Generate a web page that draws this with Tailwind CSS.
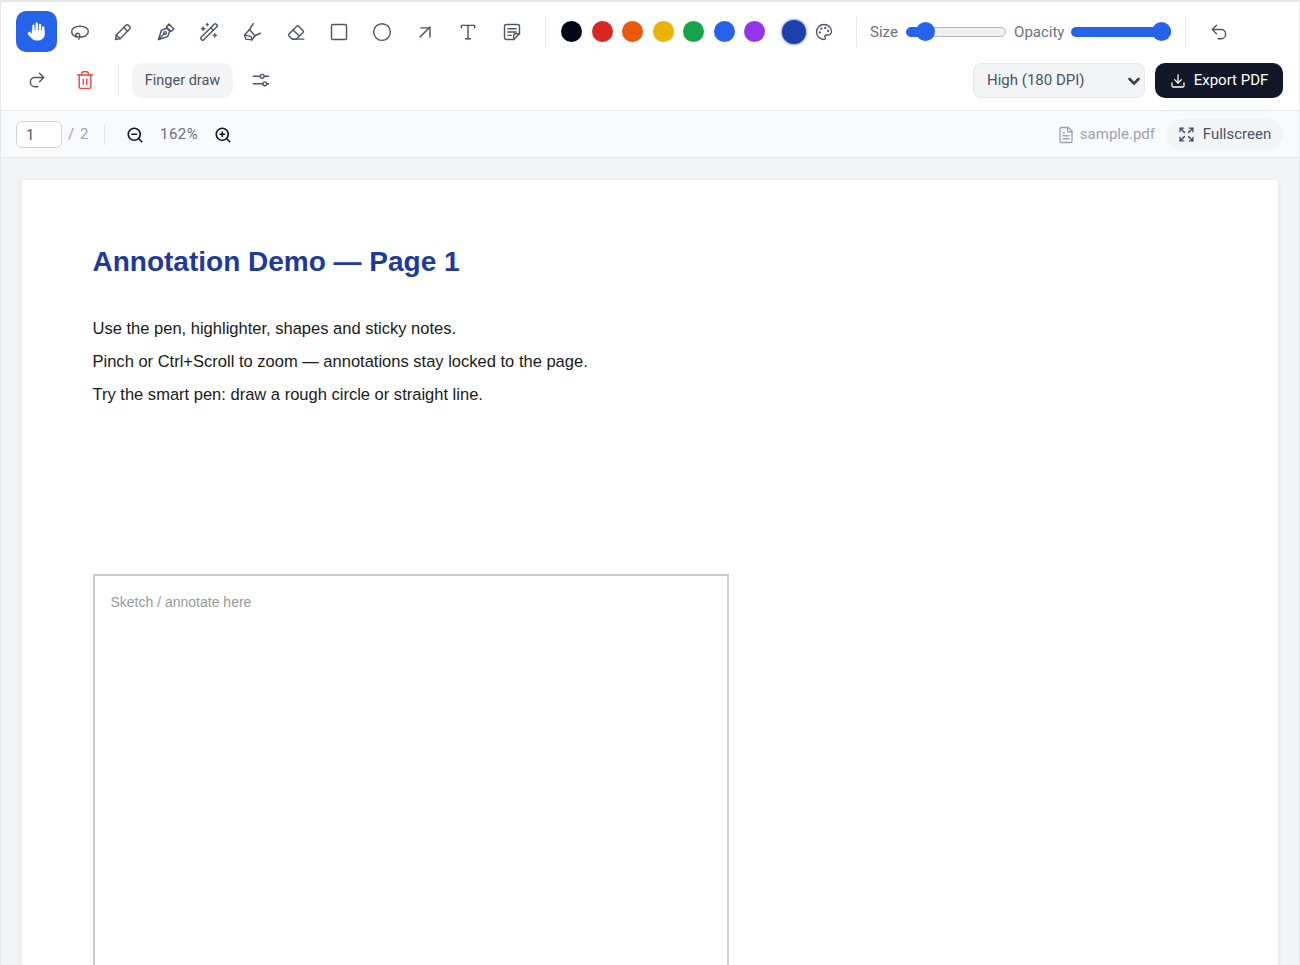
<!DOCTYPE html>
<html lang="en">
<head>
  <meta charset="UTF-8">
  <title>PDF Annotator</title>
  <script src="https://cdn.jsdelivr.net/npm/@tailwindcss/browser@4"></script>
</head>
<body class="bg-[#f3f4f6] font-['Roboto',sans-serif] h-[965px] overflow-hidden">
  <div class="border-x border-[#e5e7eb] h-[965px] flex flex-col">

    <!-- toolbar -->
    <div class="bg-white border-t-2 border-b border-[#e5e7eb] h-[111px] pl-[15px] pr-[16px] pt-[9px] flex flex-col gap-[7.500px] shrink-0">
      <div class="flex items-center h-[41px]">
        <div class="flex gap-[2.200px]">
          <button class="w-[41px] h-[41px] rounded-[10px] bg-[#2563eb] flex items-center justify-center">
            <svg class="w-[21px] h-[21px]" viewBox="0 0 24 24" fill="#fff" stroke="#fff" stroke-linecap="round" stroke-linejoin="round"><path d="M8.500 5.500v9M12.300 3v9M16 4.500v9M19.700 7.500v7" stroke-width="2.800" fill="none"/><path d="M7.200 11h13.900v4a7 7 0 0 1-7 7h-2c-2.500 0-4.200-.9-5.500-2.200l-4-4.300a1.700 1.700 0 0 1 2.500-2.300l2.100 2z" stroke-width=".6"/></svg>
          </button>
          <button class="w-[41px] h-[41px] flex items-center justify-center text-[#4b5563]"><svg class="w-[20px] h-[20px]" viewBox="0 0 24 24" fill="none" stroke="currentColor" stroke-width="1.700" stroke-linecap="round" stroke-linejoin="round"><path d="M8 18c-3.500-1-6-3.500-6-6.500C2 7.500 6.500 5 12 5s10 2.500 10 6.500-4.500 6.500-10 6.500c-3 0-5-1-5-2.500s2-2.500 3.500-1.500c1.500 1 1.500 3.500 0 6.500"/></svg></button>
          <button class="w-[41px] h-[41px] flex items-center justify-center text-[#4b5563]"><svg class="w-[20px] h-[20px]" viewBox="0 0 24 24" fill="none" stroke="currentColor" stroke-width="1.700" stroke-linecap="round" stroke-linejoin="round"><path d="M3 21l1-5.500L15.500 4a2.100 2.100 0 0 1 3 0l1.500 1.500a2.100 2.100 0 0 1 0 3L8.500 20z"/><path d="M13 6.500l4.500 4.500"/><path d="M4 15.500l4.500 4.500"/></svg></button>
          <button class="w-[41px] h-[41px] flex items-center justify-center text-[#4b5563]"><svg class="w-[20px] h-[20px]" viewBox="0 0 24 24" fill="none" stroke="currentColor" stroke-width="1.700" stroke-linecap="round" stroke-linejoin="round"><path d="M3 21l3.500-11 6.500-2.500 3.500 3.500-2.500 6.500z"/><path d="M12.500 6l3-3.500 6 6-3.500 3z"/><path d="M3 21l6.500-6.500"/><circle cx="10.800" cy="13.200" r="1.700"/></svg></button>
          <button class="w-[41px] h-[41px] flex items-center justify-center text-[#4b5563]"><svg class="w-[20px] h-[20px]" viewBox="0 0 24 24" fill="none" stroke="currentColor" stroke-width="1.700" stroke-linecap="round" stroke-linejoin="round"><path d="m21.640 3.640-1.280-1.280a1.210 1.210 0 0 0-1.720 0L2.360 18.640a1.210 1.210 0 0 0 0 1.720l1.280 1.280a1.200 1.200 0 0 0 1.720 0L21.640 5.360a1.200 1.200 0 0 0 0-1.720"/><path d="m14 7 3 3"/><path d="M5 6v4"/><path d="M19 14v4"/><path d="M10 2v2"/><path d="M7 8H3"/><path d="M21 16h-4"/><path d="M11 3H9"/></svg></button>
          <button class="w-[41px] h-[41px] flex items-center justify-center text-[#4b5563]"><svg class="w-[20px] h-[20px]" viewBox="0 0 24 24" fill="none" stroke="currentColor" stroke-width="1.700" stroke-linecap="round" stroke-linejoin="round"><path d="M13.500 2 9 9"/><path d="M22 13.500l-6.500 3"/><path d="M9 9l6.500 7.500"/><path d="M9 9l-6 6.500 1.500 5 7.500 1 3.500-5"/><path d="M3 15.500l8 2 1 4"/></svg></button>
          <button class="w-[41px] h-[41px] flex items-center justify-center text-[#4b5563]"><svg class="w-[20px] h-[20px]" viewBox="0 0 24 24" fill="none" stroke="currentColor" stroke-width="1.700" stroke-linecap="round" stroke-linejoin="round"><path d="M7.500 20.500 3.500 16.500a1.500 1.500 0 0 1 0-2L13 5a1.500 1.500 0 0 1 2 0l5.500 5.500a1.500 1.500 0 0 1 0 2l-8 8z"/><path d="M8.500 9.500l6.500 6.500"/><path d="M7.500 20.500H21.500"/></svg></button>
          <button class="w-[41px] h-[41px] flex items-center justify-center text-[#4b5563]"><svg class="w-[20px] h-[20px]" viewBox="0 0 24 24" fill="none" stroke="currentColor" stroke-width="1.700" stroke-linecap="round" stroke-linejoin="round"><rect x="3" y="3" width="18" height="18" rx="1.500"/></svg></button>
          <button class="w-[41px] h-[41px] flex items-center justify-center text-[#4b5563]"><svg class="w-[20px] h-[20px]" viewBox="0 0 24 24" fill="none" stroke="currentColor" stroke-width="1.700"><circle cx="12" cy="12" r="10"/></svg></button>
          <button class="w-[41px] h-[41px] flex items-center justify-center text-[#4b5563]"><svg class="w-[20px] h-[20px]" viewBox="0 0 24 24" fill="none" stroke="currentColor" stroke-width="1.700" stroke-linecap="round" stroke-linejoin="round"><path d="M7 7h11v11"/><path d="M6 18 18 6"/></svg></button>
          <button class="w-[41px] h-[41px] flex items-center justify-center text-[#4b5563]"><svg class="w-[20px] h-[20px]" viewBox="0 0 24 24" fill="none" stroke="currentColor" stroke-width="1.700" stroke-linecap="round" stroke-linejoin="round"><path d="M12 4v16"/><path d="M4 7V4h16v3"/><path d="M9 20h6"/></svg></button>
          <button class="w-[41px] h-[41px] flex items-center justify-center text-[#4b5563]"><svg class="w-[20px] h-[20px]" viewBox="0 0 24 24" fill="none" stroke="currentColor" stroke-width="1.700" stroke-linecap="round" stroke-linejoin="round"><path d="M14 21H5a2 2 0 0 1-2-2V5a2 2 0 0 1 2-2h14a2 2 0 0 1 2 2v9z"/><path d="M14 21v-5a2 2 0 0 1 2-2h5"/><path d="M7 8h10M7 12h10M7 16h4"/></svg></button>
        </div>

        <div class="w-px h-[30px] bg-[#e5e7eb] ml-[13px] mr-[15px]"></div>

        <div class="flex gap-[9.500px]">
          <span class="w-[21px] h-[21px] rounded-full bg-[#030712] shadow-[0_0_0_2px_#f9fafb]"></span>
          <span class="w-[21px] h-[21px] rounded-full bg-[#dc2626] shadow-[0_0_0_2px_#f9fafb]"></span>
          <span class="w-[21px] h-[21px] rounded-full bg-[#ea580c] shadow-[0_0_0_2px_#f9fafb]"></span>
          <span class="w-[21px] h-[21px] rounded-full bg-[#eab308] shadow-[0_0_0_2px_#f9fafb]"></span>
          <span class="w-[21px] h-[21px] rounded-full bg-[#16a34a] shadow-[0_0_0_2px_#f9fafb]"></span>
          <span class="w-[21px] h-[21px] rounded-full bg-[#2563eb] shadow-[0_0_0_2px_#f9fafb]"></span>
          <span class="w-[21px] h-[21px] rounded-full bg-[#9333ea] shadow-[0_0_0_2px_#f9fafb]"></span>
        </div>
        <span class="w-[24px] h-[24px] rounded-full bg-[#1e40af] ml-[17px] shadow-[0_0_2px_1px_#93a5d8]"></span>
        <svg class="w-[18px] h-[18px] ml-[9px] text-[#4b5563]" viewBox="0 0 24 24" fill="none" stroke="currentColor" stroke-width="1.800" stroke-linecap="round" stroke-linejoin="round"><path d="M12 22a1 1 0 0 1 0-20 10 9 0 0 1 10 9 5 5 0 0 1-5 5h-2.250a1.750 1.750 0 0 0-1.400 2.800l.3.4a1.750 1.750 0 0 1-1.400 2.800z"/><circle cx="13.500" cy="6.500" r=".6" fill="currentColor"/><circle cx="17.500" cy="10.500" r=".6" fill="currentColor"/><circle cx="6.500" cy="12.500" r=".6" fill="currentColor"/><circle cx="8.500" cy="7.500" r=".6" fill="currentColor"/></svg>

        <div class="w-px h-[30px] bg-[#e5e7eb] ml-[23px] mr-[13px]"></div>

        <span class="w-[28px] pt-[1px] text-[15px] text-[#6b7280]">Size</span>
        <div class="relative w-[100px] h-[10px] ml-[8px] rounded-full bg-[#f0f0f0] border border-[#b5b5b5]">
          <div class="h-full w-[20px] rounded-full bg-[#2563eb] -m-px box-content border border-[#2563eb]"></div>
          <div class="absolute left-[9px] top-[-5.500px] w-[19px] h-[19px] rounded-full bg-[#2563eb]"></div>
        </div>
        <span class="w-[49px] pt-[1px] text-[15px] text-[#6b7280] ml-[8px]">Opacity</span>
        <div class="relative w-[100px] h-[10px] ml-[8px] rounded-full bg-[#2563eb]">
          <div class="absolute right-0 top-[-4.500px] w-[19px] h-[19px] rounded-full bg-[#2563eb]"></div>
        </div>

        <div class="w-px h-[30px] bg-[#e5e7eb] ml-[14px] mr-[12px]"></div>

        <button class="w-[41px] h-[41px] flex items-center justify-center text-[#4b5563]"><svg class="w-[20px] h-[20px]" viewBox="0 0 24 24" fill="none" stroke="currentColor" stroke-width="1.700" stroke-linecap="round" stroke-linejoin="round"><path d="M9 14 4 9l5-5"/><path d="M4 9h10.500a5.500 5.500 0 0 1 5.500 5.500a5.500 5.500 0 0 1-5.500 5.500H11"/></svg></button>
      </div>

      <div class="flex items-center h-[41px]">
        <button class="w-[41px] h-[41px] flex items-center justify-center text-[#4b5563]"><svg class="w-[20px] h-[20px]" viewBox="0 0 24 24" fill="none" stroke="currentColor" stroke-width="1.700" stroke-linecap="round" stroke-linejoin="round"><path d="m15 14 5-5-5-5"/><path d="M20 9H9.500A5.500 5.500 0 0 0 4 14.500A5.500 5.500 0 0 0 9.500 20H13"/></svg></button>
        <button class="w-[41px] h-[41px] ml-[7px] flex items-center justify-center text-[#ef4444]"><svg class="w-[20px] h-[20px]" viewBox="0 0 24 24" fill="none" stroke="currentColor" stroke-width="1.700" stroke-linecap="round" stroke-linejoin="round"><path d="M3 6h18"/><path d="M19 6v14c0 1-1 2-2 2H7c-1 0-2-1-2-2V6"/><path d="M8 6V4c0-1 1-2 2-2h4c1 0 2 1 2 2v2"/><path d="M10 11v6"/><path d="M14 11v6"/></svg></button>
        <div class="w-px h-[30px] bg-[#e5e7eb] ml-[13px] mr-[13px]"></div>
        <button class="w-[101px] h-[35px] pt-[1px] rounded-[10px] bg-[#f3f4f6] text-[14.500px] text-[#4b5563]">Finger draw</button>
        <button class="w-[41px] h-[41px] ml-[7px] flex items-center justify-center text-[#4b5563]"><svg class="w-[20px] h-[20px]" viewBox="0 0 24 24" fill="none" stroke="currentColor" stroke-width="1.700" stroke-linecap="round"><path d="M3 7.500h8M16 7.500h5M3 16.500h11M19 16.500h2"/><circle cx="13.500" cy="7.500" r="2.300"/><circle cx="16.500" cy="16.500" r="2.300"/></svg></button>
        <div class="relative ml-auto">
          <select class="appearance-none w-[172px] h-[35px] pl-[13px] rounded-[8px] bg-[#f3f4f6] border border-[#e5e7eb] text-[15px] text-[#4b5563]">
            <option>High (180 DPI)</option>
          </select>
          <svg class="absolute right-[4px] top-[11px] w-[14px] h-[14px] text-[#374151]" viewBox="0 0 14 14" fill="none" stroke="currentColor" stroke-width="2.600" stroke-linecap="round" stroke-linejoin="round"><path d="M2.500 5 7 9.500 11.500 5"/></svg>
        </div>
        <button class="ml-[10px] w-[128px] h-[35px] pt-[1px] rounded-[10px] bg-[#111827] text-white text-[15px] flex items-center justify-center gap-[8px]">
          <svg class="w-[16px] h-[16px]" viewBox="0 0 24 24" fill="none" stroke="currentColor" stroke-width="1.900" stroke-linecap="round" stroke-linejoin="round"><path d="M21 15v4a2 2 0 0 1-2 2H5a2 2 0 0 1-2-2v-4"/><path d="m7 10 5 5 5-5"/><path d="M12 15V3"/></svg>
          Export PDF
        </button>
      </div>
    </div>

    <!-- page bar -->
    <div class="bg-[#f9fafb] border-b border-[#e5e7eb] h-[47px] pt-[1px] pl-[15px] pr-[16px] flex items-center shrink-0">
      <input value="1" class="w-[46px] h-[27px] px-[9px] rounded-[6px] bg-white border border-[#d1d5db] text-[15px] text-[#4b5563]">
      <span class="ml-[6px] w-[21px] whitespace-nowrap text-[15px] tracking-[1px] text-[#9ca3af]">/ 2</span>
      <div class="w-px h-[20px] bg-[#e5e7eb] ml-[15px] mr-[21px]"></div>
      <svg class="w-[18px] h-[18px] text-[#111827]" viewBox="0 0 24 24" fill="none" stroke="currentColor" stroke-width="2.200" stroke-linecap="round"><circle cx="11" cy="11" r="8"/><path d="m21 21-4.300-4.300"/><path d="M8 11h6"/></svg>
      <span class="ml-[16px] w-[38px] text-[15px] tracking-[.5px] text-[#6b7280]">162%</span>
      <svg class="ml-[16px] w-[18px] h-[18px] text-[#111827]" viewBox="0 0 24 24" fill="none" stroke="currentColor" stroke-width="2.200" stroke-linecap="round"><circle cx="11" cy="11" r="8"/><path d="m21 21-4.300-4.300"/><path d="M8 11h6"/><path d="M11 8v6"/></svg>
      <svg class="ml-auto w-[18px] h-[18px] text-[#9ca3af]" viewBox="0 0 24 24" fill="none" stroke="currentColor" stroke-width="1.800" stroke-linecap="round" stroke-linejoin="round"><path d="M15 2H6a2 2 0 0 0-2 2v16a2 2 0 0 0 2 2h12a2 2 0 0 0 2-2V7z"/><path d="M14 2v4a2 2 0 0 0 2 2h4"/><path d="M8 13h8M8 17h8M8 9h2"/></svg>
      <span class="ml-[5px] text-[15px] text-[#9ca3af]">sample.pdf</span>
      <button class="ml-[11px] h-[31px] w-[117px] rounded-full bg-[#f3f4f6] flex items-center justify-center gap-[8px] text-[15px] text-[#4b5563]">
        <svg class="w-[17px] h-[17px]" viewBox="0 0 24 24" fill="none" stroke="currentColor" stroke-width="2" stroke-linecap="round" stroke-linejoin="round"><path d="M3 8V3h5M3 3l6 6M21 8V3h-5M21 3l-6 6M3 16v5h5M3 21l6-6M21 16v5h-5M21 21l-6-6"/></svg>
        Fullscreen
      </button>
    </div>

    <!-- document -->
    <div class="flex-1 overflow-hidden pt-[22px] px-[21px]">
      <div class="bg-white h-[900px] shadow-[0_1px_6px_rgba(0,0,0,0.08)] pt-[63.500px] px-[70.500px] font-['Liberation_Sans',sans-serif]">
        <h1 class="text-[28px] leading-[36px] font-bold text-[#1e3a9a]">Annotation Demo — Page 1</h1>
        <div class="mt-[32.500px] text-[16.530px] leading-[33px] text-[#1a1a1a]">
          <p>Use the pen, highlighter, shapes and sticky notes.</p>
          <p>Pinch or Ctrl+Scroll to zoom — annotations stay locked to the page.</p>
          <p>Try the smart pen: draw a rough circle or straight line.</p>
        </div>
        <div class="mt-[163px] w-[636px] h-[500px] border-2 border-[#cccccc] pt-[15px] pl-[16px] text-[14px] leading-[22px] text-[#999999]">Sketch / annotate here</div>
      </div>
    </div>
  </div>
</body>
</html>
